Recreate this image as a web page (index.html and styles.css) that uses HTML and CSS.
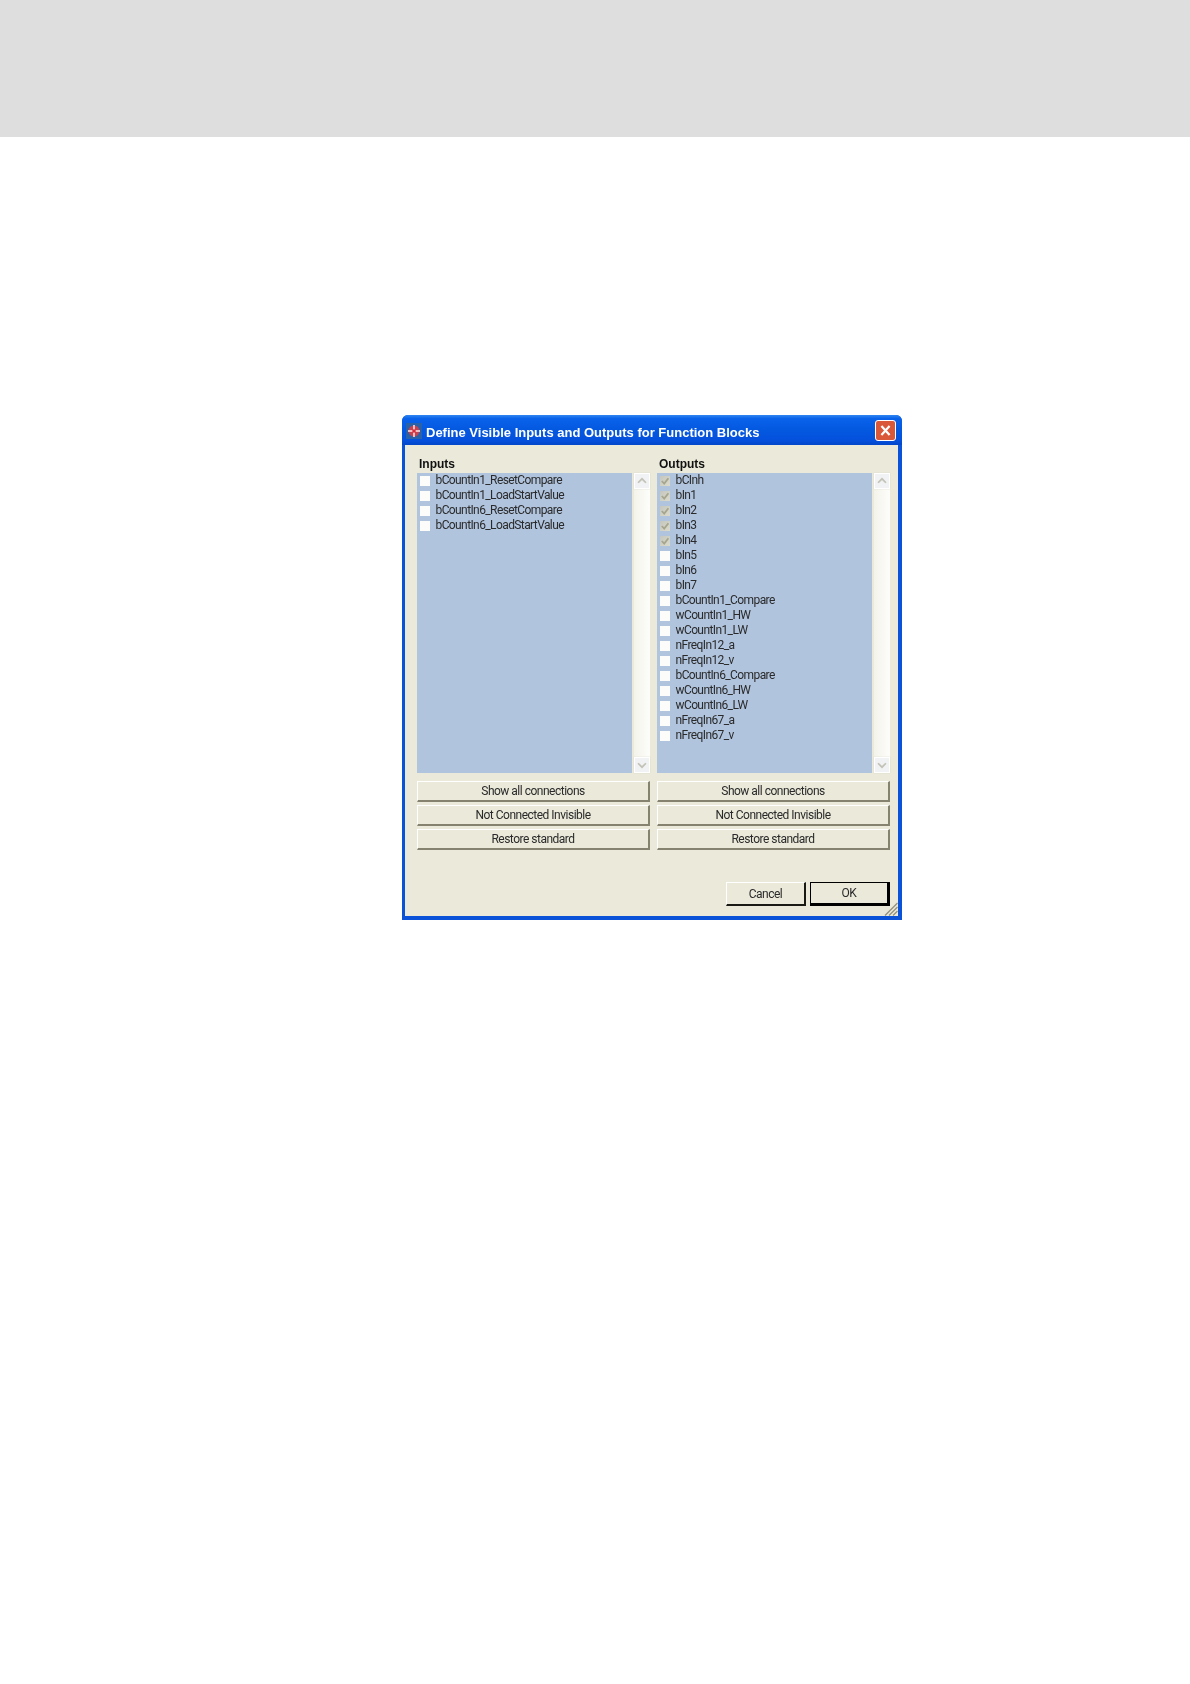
FILE: index.html
```html
<!DOCTYPE html>
<html lang="en">
<head>
<meta charset="utf-8">
<title>Define Visible Inputs and Outputs for Function Blocks</title>
<link rel="stylesheet" href="styles.css">
</head>
<body>
<header class="band"></header>
<main class="dialog">
  <div class="titlebar">
    <svg class="appicon" viewBox="0 0 16 16" aria-hidden="true">
      <rect width="16" height="16" fill="#2a62a8"/>
      <circle cx="8" cy="8" r="5.500" fill="#c8414f"/>
      <path d="M8 2v12M2 8h12" stroke="#eec0c4" stroke-width="2"/>
      <circle cx="8" cy="8" r="1.800" fill="#d92a3a"/>
    </svg>
    <h1 class="title">Define Visible Inputs and Outputs for Function Blocks</h1>
    <div class="close" aria-label="Close">
      <svg viewBox="0 0 21 21" aria-hidden="true"><path d="M6 5.500l9 10M15 5.500l-9 10" stroke="#fff" stroke-width="2.400" fill="none"/></svg>
    </div>
  </div>
  <div class="client">
    <div class="columns">
      <section class="col">
        <div class="label">Inputs</div>
        <div class="listrow">
          <ul class="list">
            <li class="item"><span class="box"></span>bCountIn1_ResetCompare</li>
            <li class="item"><span class="box"></span>bCountIn1_LoadStartValue</li>
            <li class="item"><span class="box"></span>bCountIn6_ResetCompare</li>
            <li class="item"><span class="box"></span>bCountIn6_LoadStartValue</li>
          </ul>
          <div class="scroll">
            <div class="sbtn"><svg viewBox="0 0 16 16"><path d="M3.500 10L8 5.500l4.500 4.500" class="arrow"/></svg></div>
            <div class="sbtn"><svg viewBox="0 0 16 16"><path d="M3.500 6L8 10.500 12.500 6" class="arrow"/></svg></div>
          </div>
        </div>
        <div class="btnstack">
          <div class="btn">Show all connections</div>
          <div class="btn">Not Connected Invisible</div>
          <div class="btn">Restore standard</div>
        </div>
      </section>
      <section class="col">
        <div class="label">Outputs</div>
        <div class="listrow">
          <ul class="list">
            <li class="item"><span class="box on"><svg viewBox="0 0 10 10"><path d="M1.800 5l2.400 2.600L8.400 2.200" class="tick"/></svg></span>bCInh</li>
            <li class="item"><span class="box on"><svg viewBox="0 0 10 10"><path d="M1.800 5l2.400 2.600L8.400 2.200" class="tick"/></svg></span>bIn1</li>
            <li class="item"><span class="box on"><svg viewBox="0 0 10 10"><path d="M1.800 5l2.400 2.600L8.400 2.200" class="tick"/></svg></span>bIn2</li>
            <li class="item"><span class="box on"><svg viewBox="0 0 10 10"><path d="M1.800 5l2.400 2.600L8.400 2.200" class="tick"/></svg></span>bIn3</li>
            <li class="item"><span class="box on"><svg viewBox="0 0 10 10"><path d="M1.800 5l2.400 2.600L8.400 2.200" class="tick"/></svg></span>bIn4</li>
            <li class="item"><span class="box"></span>bIn5</li>
            <li class="item"><span class="box"></span>bIn6</li>
            <li class="item"><span class="box"></span>bIn7</li>
            <li class="item"><span class="box"></span>bCountIn1_Compare</li>
            <li class="item"><span class="box"></span>wCountIn1_HW</li>
            <li class="item"><span class="box"></span>wCountIn1_LW</li>
            <li class="item"><span class="box"></span>nFreqIn12_a</li>
            <li class="item"><span class="box"></span>nFreqIn12_v</li>
            <li class="item"><span class="box"></span>bCountIn6_Compare</li>
            <li class="item"><span class="box"></span>wCountIn6_HW</li>
            <li class="item"><span class="box"></span>wCountIn6_LW</li>
            <li class="item"><span class="box"></span>nFreqIn67_a</li>
            <li class="item"><span class="box"></span>nFreqIn67_v</li>
          </ul>
          <div class="scroll">
            <div class="sbtn"><svg viewBox="0 0 16 16"><path d="M3.500 10L8 5.500l4.500 4.500" class="arrow"/></svg></div>
            <div class="sbtn"><svg viewBox="0 0 16 16"><path d="M3.500 6L8 10.500 12.500 6" class="arrow"/></svg></div>
          </div>
        </div>
        <div class="btnstack">
          <div class="btn">Show all connections</div>
          <div class="btn">Not Connected Invisible</div>
          <div class="btn">Restore standard</div>
        </div>
      </section>
    </div>
    <div class="actions">
      <div class="btn action">Cancel</div>
      <div class="btn action default">OK</div>
    </div>
    <svg class="grip" viewBox="0 0 14 14" aria-hidden="true"><path d="M13.500 1L1 13.500M13.500 5L5 13.500M13.500 9L9 13.500" stroke="#93907f" stroke-width="1.300" fill="none"/></svg>
  </div>
</main>
</body>
</html>
```
FILE: styles.css
```css
* { box-sizing: border-box; }
html, body { margin: 0; padding: 0; background: #fff; }
body { font-family: "Liberation Sans", Arial, sans-serif; color: #111; }
.band { height: 137px; background: #dedede; }
.dialog {
  position: relative;
  width: 500px;
  height: 505px;
  margin: 278px 0 0 402px;
  display: flex;
  flex-direction: column;
  border-radius: 6px 6px 0 0;
  background: #0a52d8;
  overflow: hidden;
  filter: blur(0.4px);
}
.titlebar {
  height: 30px;
  flex: none;
  display: flex;
  align-items: center;
  padding: 0 6px 0 4px;
  background: linear-gradient(#2f86f0 0, #0a62ea 12%, #0458e0 50%, #0450dc 85%, #0346c8 100%);
}
.appicon { width: 16px; height: 16px; flex: none; margin-top: 2px; }
.title {
  margin: 4px 0 0 4px;
  flex: 1;
  font-family: "Liberation Sans", Arial, sans-serif;
  font-size: 13px;
  font-weight: 700;
  color: #fff;
  white-space: nowrap;
}
.close {
  width: 21px;
  height: 21px;
  border: 1px solid #fff;
  border-radius: 3px;
  background: #d9583a;
  flex: none;
}
.close svg { display: block; width: 19px; height: 19px; }
.client {
  position: relative;
  flex: 1;
  margin: 0 4px 4px 3px;
  padding: 12px 8px 0 12px;
  background: #ebe9da;
  display: flex;
  flex-direction: column;
}
.columns { display: grid; grid-template-columns: 233px 233px; column-gap: 7px; }
.label { font-size: 12px; font-weight: 700; line-height: 14px; height: 16px; padding-left: 2px; }
.listrow { display: flex; gap: 2px; height: 300px; }
.list {
  flex: 1;
  list-style: none;
  margin: 0;
  padding: 0;
  background: #b0c4de;
}
.item {
  height: 15px;
  padding-bottom: 1px;
  display: flex;
  align-items: center;
  font-family: Roboto, "Liberation Sans", sans-serif;
  font-size: 12px;
  letter-spacing: -0.6px;
  color: #2a2a2a;
  white-space: nowrap;
}
.box {
  width: 10px;
  height: 10px;
  margin: 1px 5.500px 0 3px;
  background: #fcfcfa;
  flex: none;
}
.box.on { background: linear-gradient(135deg, #c4c6be, #dcdbcc); }
.box svg { display: block; width: 10px; height: 10px; }
.tick { fill: none; stroke: #a6a68e; stroke-width: 1.800; }
.scroll {
  width: 16px;
  flex: none;
  display: flex;
  flex-direction: column;
  justify-content: space-between;
  background: linear-gradient(90deg, #f4f3ea, #fdfdfb);
}
.sbtn {
  height: 16px;
  background: #f1f2f4;
  border: 1px solid #fff;
  box-shadow: 0 0 1px #cfcdbd;
}
.sbtn svg { display: block; width: 14px; height: 14px; }
.arrow { fill: none; stroke: #c3c2b6; stroke-width: 2; }
.btnstack { display: flex; flex-direction: column; gap: 3px; margin-top: 8px; }
.btn {
  height: 21px;
  display: flex;
  align-items: center;
  justify-content: center;
  font-family: Roboto, "Liberation Sans", sans-serif;
  font-size: 12px;
  letter-spacing: -0.5px;
  color: #2a2a2a;
  background: #ebe9da;
  border-top: 1px solid #fff;
  border-left: 1px solid #fff;
  border-right: 2px solid #85836f;
  border-bottom: 2px solid #85836f;
}
.actions { display: flex; justify-content: flex-end; gap: 4px; margin-top: 32px; }
.action {
  width: 80px;
  height: 24px;
  border-right: 2px solid #1a1a14;
  border-bottom: 2px solid #1a1a14;
}
.default { border: 1px solid #000; border-bottom-width: 3px; border-right-width: 3px; }
.grip { position: absolute; right: 0; bottom: 0; width: 14px; height: 14px; }
```
